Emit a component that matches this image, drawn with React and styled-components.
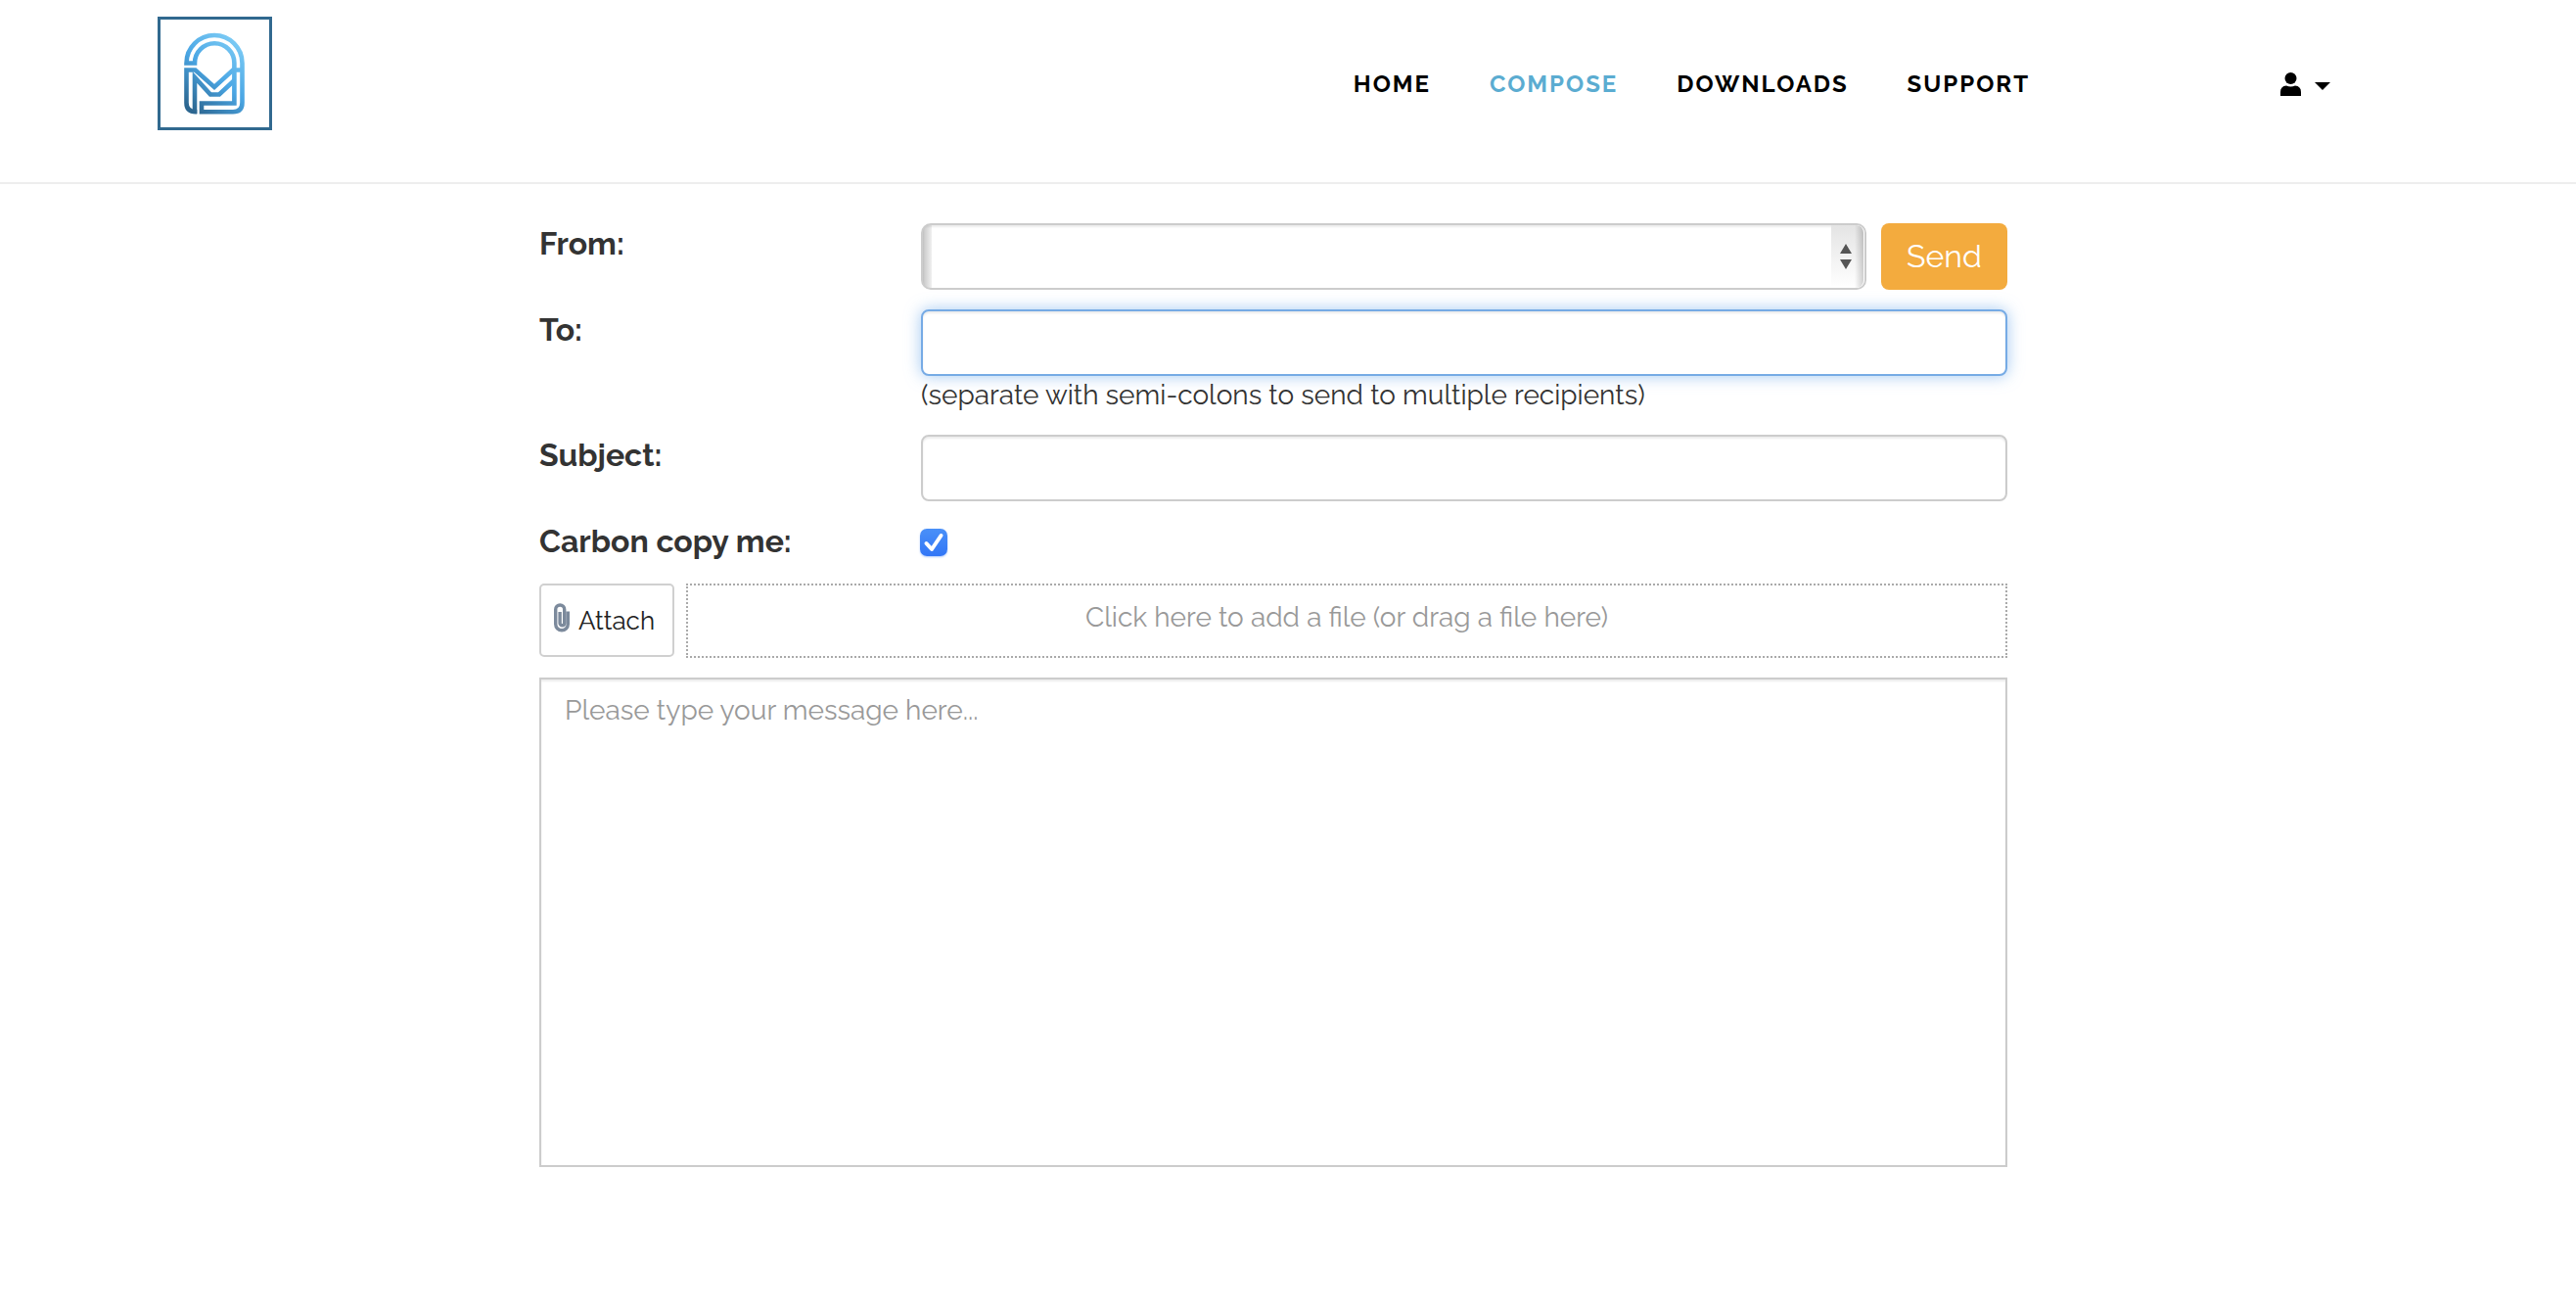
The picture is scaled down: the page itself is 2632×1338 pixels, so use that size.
import styled, { createGlobalStyle } from "styled-components";

const GlobalStyle = createGlobalStyle`
  * {
    box-sizing: border-box;
  }
  body {
    margin: 0;
    background-color: #fff;
    color: #333;
    font-family: Raleway, Lato, sans-serif;
    font-size: 28px;
    line-height: 40px;
  }
  button,
  input,
  select,
  textarea {
    font-family: inherit;
  }
`;
const Page = styled.div`
  padding-right: 30px;
`;
const Header = styled.header`
  margin-right: -30px;
  padding-right: 30px;
  border-bottom: 2px solid #eee;
`;
const HeaderInner = styled.div`
  max-width: 2340px;
  height: 186px;
  margin: 0 auto;
  padding: 17px 90px 0 30px;
  display: flex;
`;
const LogoLink = styled.a`
  width: 117px;
  height: 116px;
  border: 3px solid #31698f;
  display: flex;
  justify-content: center;
  align-items: center;
`;
const Nav = styled.nav`
  height: 138px;
  margin-left: auto;
  display: flex;
  align-items: center;
  gap: 60px;
`;
const NavLink = styled.a`
  color: ${(props) => (props.$active ? "#5bacd1" : "#000")};
  font-size: 24px;
  font-weight: 700;
  letter-spacing: 2px;
  text-decoration: none;
`;
const UserBtn = styled.button`
  height: 138px;
  margin-left: 256px;
  padding: 0;
  border: 0;
  background: none;
  display: flex;
  align-items: center;
  gap: 14px;
`;
const Form = styled.form`
  max-width: 1560px;
  margin: 0 auto;
  padding: 40px 30px;
  display: flex;
  flex-direction: column;
  gap: 20px;
`;
const Row = styled.div`
  min-height: 44px;
  display: grid;
  grid-template-columns: 26% 1fr;
`;
const Label = styled.label`
  font-size: 32px;
  font-weight: 700;
  line-height: 42px;
`;
const FieldWrap = styled.div`
  display: flex;
  gap: 15px;
`;
const Input = styled.input`
  width: 100%;
  height: 68px;
  padding: 12px 24px;
  border: 2px solid #ccc;
  border-radius: 8px;
  outline: 0;
  display: block;
  font-size: 28px;
  box-shadow: inset 0 2px 2px rgba(0, 0, 0, 0.075);
  &:focus {
    border-color: #76abe5;
    box-shadow: inset 0 2px 2px rgba(0, 0, 0, 0.075),
      0 0 16px rgba(102, 165, 233, 0.6);
  }
`;
const SelectWrap = styled.div`
  flex: 1;
  height: 68px;
  border: 2px solid #ccc;
  border-radius: 10px;
  overflow: hidden;
  display: grid;
  background: linear-gradient(90deg, #c6c6c6, #f0f0f0 9px, #fff 9px);
`;
const Select = styled.select`
  grid-area: 1 / 1;
  width: 100%;
  padding: 0 40px 0 24px;
  border: 0;
  outline: 0;
  appearance: none;
  background: none;
  box-shadow: inset 0 2px 2px rgba(0, 0, 0, 0.075);
  font-size: 28px;
`;
const SelectArrows = styled.div`
  grid-area: 1 / 1;
  justify-self: end;
  width: 34px;
  padding-right: 4px;
  border-right: 1px solid #fff;
  border-radius: 0 8px 8px 0;
  background: linear-gradient(90deg, transparent 24px, rgba(0, 0, 0, 0.18)),
    linear-gradient(#e4e4e4, #fff);
  display: flex;
  justify-content: center;
  align-items: center;
  pointer-events: none;
`;
const SendBtn = styled.button`
  width: 129px;
  height: 68px;
  padding: 0 0 2px;
  border: 0;
  border-radius: 8px;
  background-color: #f3ab3e;
  color: #fff;
  font-size: 32px;
`;
const Hint = styled.div`
  height: 40px;
`;
const CheckWrap = styled.div`
  margin: 8px 0 0 -1px;
  display: grid;
  justify-items: start;
  align-items: start;
  svg {
    grid-area: 1 / 1;
    pointer-events: none;
  }
`;
const Checkbox = styled.input`
  grid-area: 1 / 1;
  width: 28px;
  height: 28px;
  margin: 0;
  appearance: none;
  border-radius: 7px;
  box-shadow: 0 1px 2px rgba(53, 120, 246, 0.4);
  background: linear-gradient(#4a90f8, #3276f6);
`;
const AttachRow = styled.div`
  display: flex;
  gap: 12px;
`;
const AttachBtn = styled.button`
  width: 138px;
  height: 75px;
  padding: 0 0 0 12px;
  border: 2px solid #d0d0d0;
  border-radius: 5px;
  background-color: #fff;
  color: #222;
  font-size: 26px;
  display: flex;
  align-items: center;
  gap: 8px;
  svg {
    margin-bottom: 6px;
  }
`;
const DropZone = styled.button`
  flex: 1;
  height: 76px;
  padding: 0 0 8px;
  border: 2px dotted #aaa;
  background: none;
  color: #999;
  font-size: 28px;
`;
const Message = styled.textarea`
  width: 100%;
  height: 500px;
  padding: 12px 24px;
  border: 2px solid #ccc;
  outline: 0;
  resize: none;
  display: block;
  font-size: 28px;
  line-height: 40px;
  box-shadow: inset 0 2px 2px rgba(0, 0, 0, 0.075);
  &::placeholder {
    color: #999;
  }
`;

const Logo = () => (
  <svg width="64" height="84" viewBox="0 0 64 84" fill="none">
    <defs>
      <linearGradient id="logo" gradientUnits="userSpaceOnUse" x1="4" y1="76" x2="58" y2="12">
        <stop offset="0" stopColor="#2c6690" />
        <stop offset="0.5" stopColor="#4aa6e4" />
        <stop offset="1" stopColor="#7ccbf5" />
      </linearGradient>
    </defs>
    <g stroke="url(#logo)" strokeWidth="4.600">
      <path d="M11 31.500a20.200 20.200 0 0 1 40.400 0V72.500H18V81.300H50q9.500 0 9.500-9.500V31.500a28.500 28.500 0 0 0-57 0z" />
      <path d="M13.300 81.300H12Q2.500 81 2.500 72V38.500H11.500L31 56 50 38.500H59.500" />
      <path d="M11 83V46L27 63.500H36L51.500 49" />
    </g>
  </svg>
);

const navItems = ["HOME", "COMPOSE", "DOWNLOADS", "SUPPORT"];

const TopHeader = () => {
  return (
    <Header>
      <HeaderInner>
        <LogoLink href="#" aria-label="Home page">
          <Logo />
        </LogoLink>
        <Nav>
          {navItems.map((item) => (
            <NavLink key={item} href="#" $active={item === "COMPOSE"}>
              {item}
            </NavLink>
          ))}
        </Nav>
        <UserBtn type="button" aria-label="Account">
          <svg width="21" height="24" viewBox="0 0 21 24">
            <circle cx="10.5" cy="6" r="6" />
            <path d="M0 24v-4q0-6 6-6.500q4.500 2 9 0q6 .5 6 6.500v4z" />
          </svg>
          <svg width="16" height="12" viewBox="0 0 16 12">
            <path d="M0 4h16l-8 8z" />
          </svg>
        </UserBtn>
      </HeaderInner>
    </Header>
  );
};

export default function App() {
  return (
    <Page>
      <GlobalStyle />
      <TopHeader />
      <Form>
        <Row>
          <Label htmlFor="from">From:</Label>
          <FieldWrap>
            <SelectWrap>
              <Select id="from" />
              <SelectArrows>
                <svg width="12" height="26" viewBox="0 0 12 26" fill="#555">
                  <path d="M6 0l6 10H0zM6 26l6-10H0z" />
                </svg>
              </SelectArrows>
            </SelectWrap>
            <SendBtn type="button">Send</SendBtn>
          </FieldWrap>
        </Row>
        <Row>
          <Label htmlFor="to">To:</Label>
          <div>
            <Input id="to" type="text" autoFocus />
            <Hint>(separate with semi-colons to send to multiple recipients)</Hint>
          </div>
        </Row>
        <Row>
          <Label htmlFor="subject">Subject:</Label>
          <Input id="subject" type="text" />
        </Row>
        <Row>
          <Label htmlFor="copy">Carbon copy me:</Label>
          <CheckWrap>
            <Checkbox id="copy" type="checkbox" defaultChecked />
            <svg width="28" height="28" viewBox="0 0 28 28" fill="none">
              <path
                d="M6.500 15l5.500 6L21.500 7"
                stroke="#fff"
                strokeWidth="4"
                strokeLinecap="round"
                strokeLinejoin="round"
              />
            </svg>
          </CheckWrap>
        </Row>
        <AttachRow>
          <AttachBtn type="button">
            <svg width="18" height="30" viewBox="0 0 18 30" fill="none" stroke="#7c8a9c" strokeWidth="3.400">
              <path d="M15.300 8.500v13a6.300 6.300 0 0 1-12.600 0V6.500a4.500 4.500 0 0 1 9 0v14a2.300 2.300 0 0 1-4.600 0V9" />
            </svg>
            Attach
          </AttachBtn>
          <DropZone type="button">Click here to add a file (or drag a file here)</DropZone>
        </AttachRow>
        <Message aria-label="Message" placeholder="Please type your message here..." />
      </Form>
    </Page>
  );
}
